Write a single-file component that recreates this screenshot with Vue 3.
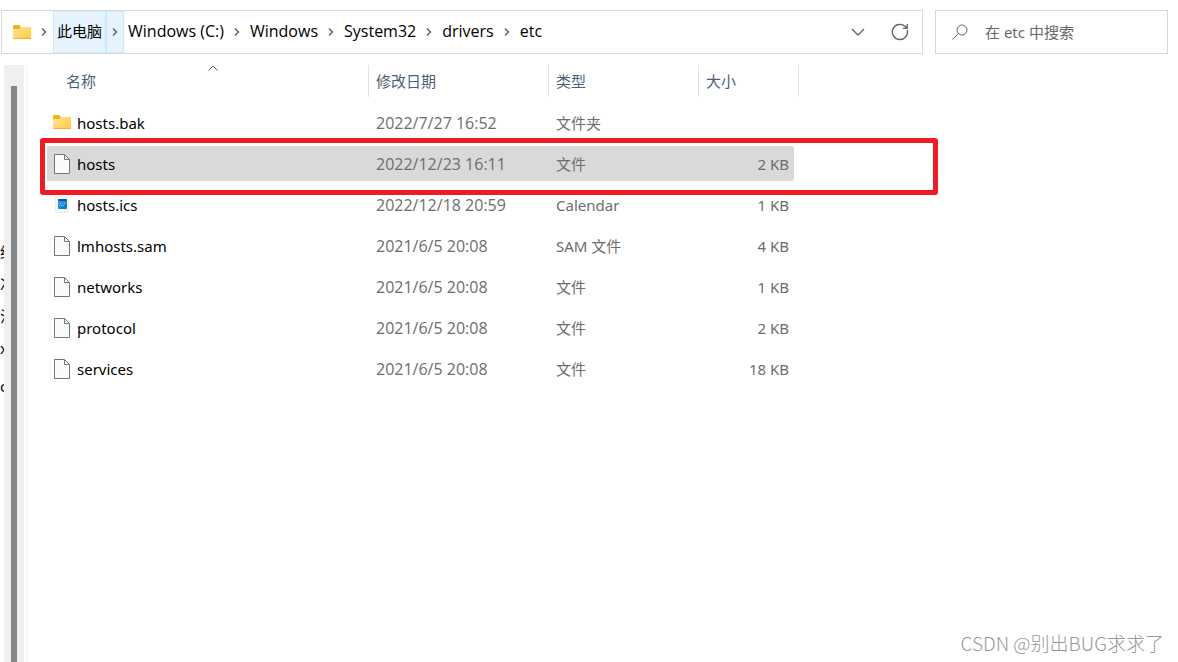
<script setup>
import { ref } from 'vue'

const crumbs = ['此电脑', 'Windows (C:)', 'Windows', 'System32', 'drivers', 'etc']
const hovered = ref(0)
const query = ref('')

const columns = [
  { key: 'name', label: '名称', sorted: true },
  { key: 'date', label: '修改日期' },
  { key: 'type', label: '类型' },
  { key: 'size', label: '大小' },
]

const files = [
  { name: 'hosts.bak', date: '2022/7/27 16:52', type: '文件夹', size: '', icon: 'folder' },
  { name: 'hosts', date: '2022/12/23 16:11', type: '文件', size: '2 KB', icon: 'file' },
  { name: 'hosts.ics', date: '2022/12/18 20:59', type: 'Calendar', size: '1 KB', icon: 'calendar' },
  { name: 'lmhosts.sam', date: '2021/6/5 20:08', type: 'SAM 文件', size: '4 KB', icon: 'file' },
  { name: 'networks', date: '2021/6/5 20:08', type: '文件', size: '1 KB', icon: 'file' },
  { name: 'protocol', date: '2021/6/5 20:08', type: '文件', size: '2 KB', icon: 'file' },
  { name: 'services', date: '2021/6/5 20:08', type: '文件', size: '18 KB', icon: 'file' },
]
const selected = ref('hosts')

const treeText = ['给', '次', '注', 'x', 'c']
</script>

<template>
  <div class="explorer">
    <svg class="defs" width="0" height="0" aria-hidden="true">
      <defs>
        <linearGradient id="folderFill" x1="0" y1="0" x2="1" y2="1">
          <stop offset="0" stop-color="#ffe69c" />
          <stop offset="1" stop-color="#ffc93c" />
        </linearGradient>
        <linearGradient id="calFill" x1="0" y1="0" x2="1" y2="1">
          <stop offset="0" stop-color="#29a8ea" />
          <stop offset="1" stop-color="#0f6cbd" />
        </linearGradient>
      </defs>
    </svg>

    <header class="toolbar">
      <nav class="address" aria-label="地址">
        <svg class="icon" width="18" height="14" viewBox="0 0 18 14">
          <path d="M0 1a1 1 0 0 1 1-1h5l2 2h9a1 1 0 0 1 1 1v4H0z" fill="#f5b31a" />
          <path d="M0 4h6l2-2h9.500a.5.5 0 0 1 .5.5V13a1 1 0 0 1-1 1H1a1 1 0 0 1-1-1z" fill="url(#folderFill)" />
          <path d="M0 13h18a1 1 0 0 1-1 1H1a1 1 0 0 1-1-1z" fill="#eeb133" />
        </svg>
        <svg class="lead" width="6" height="8" viewBox="0 0 6 8"><path d="M1 .5 4.500 4 1 7.500" /></svg>
        <div v-for="(crumb, i) in crumbs" :key="crumb" class="crumb" :class="{ hot: i === hovered }">
          <button type="button" class="crumb-name">{{ crumb }}</button>
          <button v-if="i < crumbs.length - 1" type="button" class="crumb-more" :aria-label="crumb + ' 子文件夹'">
            <svg width="6" height="8" viewBox="0 0 6 8"><path d="M1 .5 4.500 4 1 7.500" /></svg>
          </button>
        </div>
        <div class="address-actions">
          <button type="button" aria-label="以前的位置">
            <svg width="14" height="8" viewBox="0 0 14 8"><path d="M1 1l6 6 6-6" /></svg>
          </button>
          <button type="button" aria-label="刷新">
            <svg width="18" height="18" viewBox="0 0 18 18">
              <path d="M16.300 7.200A7.600 7.600 0 1 1 14.200 3.500L16 5M16.200 1v4.400h-4.400" />
            </svg>
          </button>
        </div>
      </nav>
      <label class="search">
        <svg width="16" height="16" viewBox="0 0 16 16">
          <circle cx="10" cy="6" r="5" /><path d="M6.500 9.500.5 15.500" />
        </svg>
        <input v-model="query" type="text" placeholder="在 etc 中搜索" aria-label="在 etc 中搜索" />
      </label>
    </header>

    <div class="body">
      <div class="tree">
        <span v-for="t in treeText" :key="t">{{ t }}</span>
      </div>
      <div class="scrollbar"><div class="thumb"></div></div>
      <main class="content">
        <table>
          <colgroup><col class="c-name" /><col class="c-date" /><col class="c-type" /><col class="c-size" /></colgroup>
          <thead>
            <tr>
              <th v-for="col in columns" :key="col.key" scope="col">
                <button type="button">{{ col.label }}</button>
                <svg v-if="col.sorted" class="sort" width="10" height="6" viewBox="0 0 10 6"><path d="M.5 5.500 5 1l4.500 4.500" /></svg>
              </th>
            </tr>
          </thead>
          <tbody>
            <tr v-for="f in files" :key="f.name" :class="{ selected: f.name === selected }" @click="selected = f.name">
              <td>
                <div class="name">
                  <svg v-if="f.icon === 'folder'" width="18" height="20" viewBox="0 0 18 20">
                    <path d="M0 3a1 1 0 0 1 1-1h5l2 2h9a1 1 0 0 1 1 1v4H0z" fill="#f5b31a" />
                    <path d="M0 6h6l2-2h9.500a.5.5 0 0 1 .5.5V15a1 1 0 0 1-1 1H1a1 1 0 0 1-1-1z" fill="url(#folderFill)" />
                    <path d="M0 15h18a1 1 0 0 1-1 1H1a1 1 0 0 1-1-1z" fill="#eeb133" />
                  </svg>
                  <svg v-else-if="f.icon === 'file'" width="18" height="20" viewBox="0 0 18 20">
                    <path d="M1.500.5h10l5 5v14h-15z" fill="#fafafa" stroke="#757575" />
                    <path d="M11.500.5v5h5" fill="none" stroke="#757575" />
                  </svg>
                  <svg v-else width="18" height="20" viewBox="0 0 18 20">
                    <path d="M2.500 1.500h10l3 3v13h-13z" fill="#f8f8f8" stroke="#ececec" />
                    <rect x="5" y="4" width="9" height="10" rx="1" fill="url(#calFill)" />
                    <rect x="5" y="4" width="9" height="2" rx="1" fill="#0b5ca8" />
                    <path d="M7 8.500h6M6 10.500h6" stroke="#7fd0fa" stroke-dasharray="1 1" />
                  </svg>
                  <span>{{ f.name }}</span>
                </div>
              </td>
              <td class="date">{{ f.date }}</td>
              <td>{{ f.type }}</td>
              <td class="size">{{ f.size }}</td>
            </tr>
          </tbody>
        </table>
        <div class="highlight"></div>
      </main>
    </div>
    <div class="watermark">CSDN @别出BUG求求了</div>
  </div>
</template>

<style>
body {
  margin: 0;
  background: #fff;
}
</style>

<style scoped>
.explorer {
  position: relative;
  display: flex;
  flex-direction: column;
  box-sizing: border-box;
  min-height: 100vh;
  padding-top: 10px;
  overflow: hidden;
  font: 15px/20px "Noto Sans", "Noto Sans CJK SC", sans-serif;
  color: #000;
}
.defs {
  position: absolute;
}
button {
  padding: 0;
  border: 0;
  background: none;
  font: inherit;
  color: inherit;
}
.toolbar {
  display: flex;
  gap: 12px;
  padding: 0 10px 0 1px;
}
.address,
.search {
  display: flex;
  box-sizing: border-box;
  height: 44px;
  border: 1px solid #d9d9d9;
}
.address {
  flex: 1;
  align-items: center;
  padding-left: 11px;
}
.lead {
  margin: 0 6px 0 10px;
}
.toolbar svg:not(.icon) {
  flex: none;
  fill: none;
  stroke: #666;
}
.crumb {
  display: flex;
  height: 42px;
  font: 16px/20px "Open Sans", "Noto Sans CJK SC", sans-serif;
}
.crumb-name {
  padding: 0 4px 2px;
  white-space: nowrap;
}
.crumb-more {
  display: flex;
  align-items: center;
  justify-content: center;
  width: 18px;
}
.toolbar .lead,
.toolbar .crumb-more svg {
  stroke-width: 1.500px;
}
.hot {
  font-size: 15px;
}
.hot button {
  background: #e5f3ff;
  box-shadow: inset 0 0 0 1px #cce8ff;
}
.address-actions {
  display: flex;
  gap: 26px;
  margin-left: auto;
  padding-right: 13px;
}
.address-actions button {
  display: flex;
  align-items: center;
}
.address-actions svg {
  stroke-width: 1.400px;
}
.search {
  flex: none;
  align-items: center;
  gap: 17px;
  width: 233px;
  padding: 0 16px;
}
.search input {
  flex: 1;
  width: 100%;
  min-width: 0;
  padding: 0;
  border: 0;
  outline: 0;
  background: none;
  font: inherit;
}
.search input::placeholder {
  color: #666;
  opacity: 1;
}
.body {
  display: flex;
  flex: 1;
  margin-top: 11px;
}
.tree {
  display: flex;
  flex-direction: column;
  gap: 12px;
  width: 4px;
  padding-top: 177px;
  overflow: hidden;
}
.tree span:last-child {
  margin-top: 6px;
}
.scrollbar {
  display: flex;
  justify-content: center;
  width: 20px;
  background: #efefef;
}
.thumb {
  width: 6px;
  margin-top: 21px;
  background: #868686;
}
.content {
  position: relative;
  flex: 1;
  min-width: 0;
  margin-left: 2px;
  padding-left: 20px;
  border-left: 1px solid #f5f5f5;
}
table {
  width: 752px;
  table-layout: fixed;
  border-spacing: 0;
}
.c-name { width: 322px; }
.c-date { width: 180px; }
.c-type { width: 150px; }
.c-size { width: 100px; }
th {
  position: relative;
  height: 32px;
  padding: 0 0 0 7px;
  border-right: 1px solid #e2e2e2;
  text-align: left;
  font-weight: 400;
  color: #4c607a;
}
th:first-child {
  padding-left: 19px;
}
.sort {
  position: absolute;
  top: 0;
  left: 50%;
  fill: none;
  stroke: #606060;
}
tbody::before {
  content: "";
  display: block;
  height: 5px;
}
td {
  height: 35px;
  padding: 0 0 0 7px;
  border: 0 solid transparent;
  border-width: 3px 0;
  background-clip: padding-box;
  color: #6d6d6d;
}
td:first-child {
  padding-left: 6px;
  color: #000;
}
td.date {
  font: 16px/20px "Open Sans", sans-serif;
}
td.size {
  padding-right: 5px;
  border-right-width: 5px;
  text-align: right;
}
.selected td {
  background-color: #d9d9d9;
}
.selected td:last-child {
  border-radius: 0 7px 7px 0;
}
.name {
  display: flex;
  align-items: center;
  gap: 6px;
}
.highlight {
  position: absolute;
  top: 73px;
  left: 13px;
  box-sizing: border-box;
  width: 898px;
  height: 57px;
  border: 5px solid #ed1c24;
  border-radius: 3px;
  pointer-events: none;
}
.watermark {
  position: absolute;
  right: 14px;
  bottom: 6px;
  font: 300 19px/26px "Noto Sans CJK SC", sans-serif;
  color: #999;
}
</style>
